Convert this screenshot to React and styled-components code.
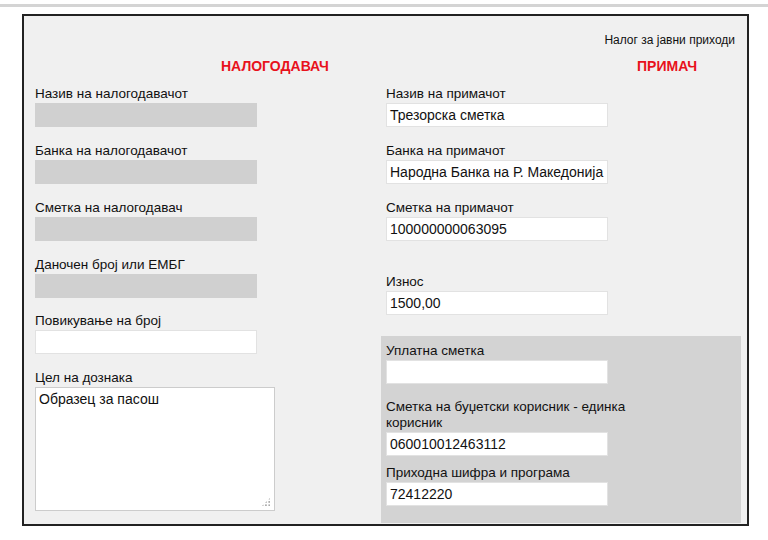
import React from "react";
import styled, { createGlobalStyle } from "styled-components";

const G = createGlobalStyle`
  body { margin: 0; background: #fff; font-family: "Liberation Sans", Arial, sans-serif; }
`;
const TopLine = styled.div`height: 3px; background: #d4d4d4; margin-top: 4px;`;
const Frame = styled.div`
  margin: 7px 0 0 22px; width: 727px; height: 512px; box-sizing: border-box;
  border: 2px solid #222; border-bottom-width: 2px; background: #f0f0f0;
  position: relative; display: flex; flex-direction: column;
`;
const Title = styled.div`
  font-size: 12px; color: #111; text-align: right; padding: 17px 12px 0 0; height: 15px;
`;
const Cols = styled.div`display: grid; grid-template-columns: 351px 1fr; padding-left: 11px;`;
const Col = styled.div`display: flex; flex-direction: column;`;
const Head = styled.div`
  color: #e8121c; font-weight: bold; font-size: 14px; height: 28px; margin-top: 10px;
  padding-left: ${p => p.$pl}px;
`;
const Label = styled.div`
  font-size: 13.5px; color: #111; margin-top: ${p => p.$mt || 0}px; line-height: 16px;
`;
const Input = styled.div`
  width: ${p => p.$w || 222}px; height: 24px; box-sizing: border-box; margin-top: 1px;
  background: ${p => (p.$dis ? "#d0d0d0" : "#fff")};
  border: 1px solid ${p => (p.$dis ? "#d0d0d0" : "#e2e2e2")};
  font-size: 14px; padding: 3px 3px; white-space: nowrap; overflow: hidden; color: #111;
`;
const Area = styled(Input)`
  width: 240px; height: 124px; position: relative; border-color: #ccc;
`;
const Grip = styled.div`
  position: absolute; right: 3px; bottom: 3px; width: 10px; height: 10px;
  background: radial-gradient(circle, #aaa 1px, transparent 1.2px) 0 0/3.3px 3.3px;
  clip-path: polygon(100% 0, 100% 100%, 0 100%);
`;
const Panel = styled.div`
  background: #d3d3d3; margin: 21px 6px 0 -5px; padding: 7px 0 5px 5px;
  display: flex; flex-direction: column; height: 187px; box-sizing: border-box;
`;

export default function App() {
  return (
    <>
      <G />
      <TopLine />
      <Frame>
        <Title>Налог за јавни приходи</Title>
        <Cols>
          <Col>
            <Head $pl={186}>НАЛОГОДАВАЧ</Head>
            <Label>Назив на налогодавачот</Label>
            <Input $dis />
            <Label $mt={16}>Банка на налогодавачот</Label>
            <Input $dis />
            <Label $mt={16}>Сметка на налогодавач</Label>
            <Input $dis />
            <Label $mt={16}>Даночен број или ЕМБГ</Label>
            <Input $dis />
            <Label $mt={15}>Повикување на број</Label>
            <Input />
            <Label $mt={16}>Цел на дознака</Label>
            <Area>Образец за пасош<Grip /></Area>
          </Col>
          <Col>
            <Head $pl={251}>ПРИМАЧ</Head>
            <Label>Назив на примачот</Label>
            <Input>Трезорска сметка</Input>
            <Label $mt={16}>Банка на примачот</Label>
            <Input>Народна Банка на Р. Македонија</Input>
            <Label $mt={16}>Сметка на примачот</Label>
            <Input>100000000063095</Input>
            <Label $mt={33}>Износ</Label>
            <Input>1500,00</Input>
            <Panel>
              <Label>Уплатна сметка</Label>
              <Input />
              <Label $mt={15}>Сметка на буџетски корисник - единка</Label>
              <Label>корисник</Label>
              <Input>060010012463112</Input>
              <Label $mt={9}>Приходна шифра и програма</Label>
              <Input>72412220</Input>
            </Panel>
          </Col>
        </Cols>
      </Frame>
    </>
  );
}
